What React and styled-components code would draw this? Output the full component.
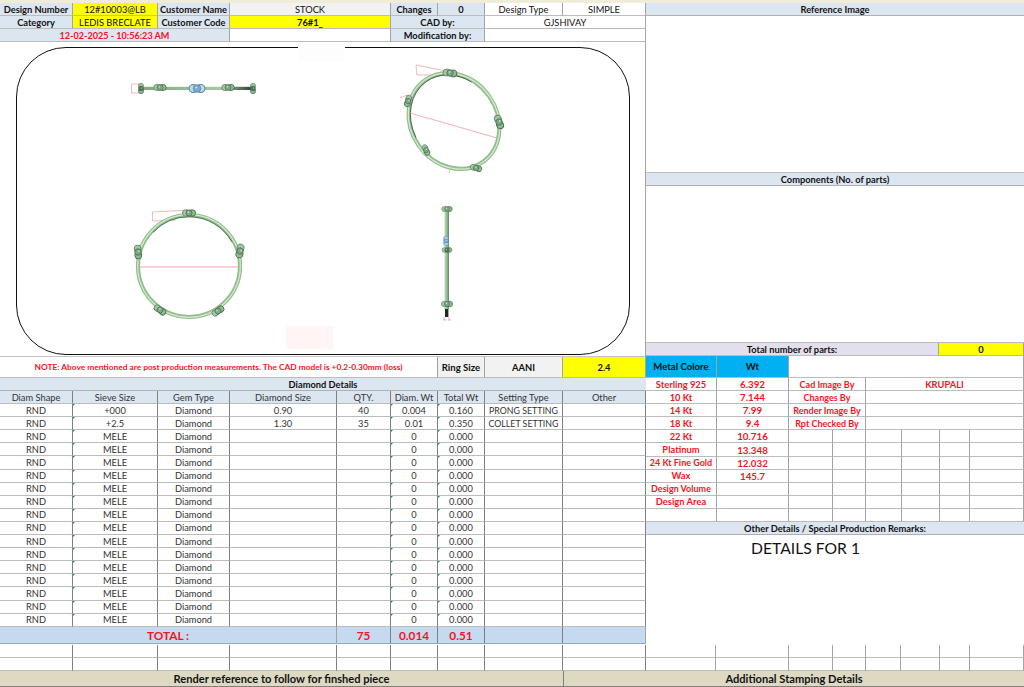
import React from "react";
import styled, { createGlobalStyle } from "styled-components";

const Global = createGlobalStyle`
  html, body { margin: 0; padding: 0; background: #fff; }
  body { font-family: Lato, "Noto Sans", sans-serif; color: #1a1a1a; }
  * { box-sizing: border-box; }
`;

const LINE = "#a3a3a3";
const DARK = "#7f7f7f";

const Page = styled.div`
  width: 1024px;
  height: 687px;
  overflow: hidden;
  display: flex;
  flex-direction: column;
  border-top: 3px solid #efecd9;
`;
const Main = styled.div`
  display: grid;
  grid-template-columns: 646px 378px;
  height: 641.5px;
`;
const Column = styled.div`
  display: flex;
  flex-direction: column;
  min-width: 0;
`;
const Row = styled.div`
  display: grid;
  grid-template-columns: ${(p) => p.$cols};
  height: ${(p) => p.$h || 13.1}px;
  flex: none;
`;
const Cell = styled.div`
  position: relative;
  display: flex;
  align-items: center;
  justify-content: center;
  white-space: nowrap;
  overflow: hidden;
  font-size: ${(p) => p.$size || 9.3}px;
  font-weight: ${(p) => (p.$bold ? 700 : 400)};
  color: ${(p) => (p.$red ? "#f5141e" : p.$soft ? "#333" : "#111")};
  background: ${(p) => p.$bg || "transparent"};
  border-right: 1px solid ${(p) => (p.$strong ? DARK : LINE)};
  border-bottom: 1px solid ${(p) => p.$under || "#bcbcbc"};
  grid-column: ${(p) => (p.$span ? `span ${p.$span}` : "auto")};
  &::before {
    content: "";
    display: ${(p) => (p.$flag ? "block" : "none")};
    position: absolute;
    left: 0;
    top: 0;
    border-top: 2.5px solid #1f8f2f;
    border-right: 2.5px solid transparent;
  }
`;
const Canvas = styled.div`
  height: 315px;
  padding: 5px 15px 1px 16px;
  border-right: 1px solid ${LINE};
  border-bottom: 1px solid #c4c4c4;
  flex: none;
`;
const Frame = styled.div`
  position: relative;
  height: 100%;
  border: 1.5px solid #111;
  border-radius: 50px;
`;
const Drawing = styled.svg`
  position: absolute;
  left: -17.5px;
  top: -6.5px;
  width: 645px;
  height: 314px;
  overflow: visible;
`;
const Panel = styled.div`
  flex: none;
  height: ${(p) => p.$h}px;
  border-bottom: 1px solid #bcbcbc;
`;
const Section = styled.div`
  flex: none;
  height: 13px;
  display: flex;
  align-items: center;
  justify-content: center;
  font-size: 9.3px;
  font-weight: 700;
  color: #111;
  background: ${(p) => p.$bg || "#dce6f1"};
  border-bottom: 1px solid #b0b0b0;
`;
const Remarks = styled.div`
  flex: 1;
  padding: 3px 0 0 105px;
  font-size: 15.7px;
  line-height: 20px;
  color: #111;
`;
const FooterRow = styled.div`
  display: grid;
  grid-template-columns: 563px 461px;
  flex: 1;
  background: #ddd9c3;
  border-bottom: 1px solid ${DARK};
`;
const FooterCell = styled.div`
  display: flex;
  align-items: center;
  justify-content: center;
  font-size: 11.1px;
  font-weight: 700;
  color: #111;
  & + & { border-left: 1px solid ${DARK}; }
`;

const BLUE = "#dce6f1";
const YEL = "#ffff00";
const TOTAL = "#c5d9f1";

const TABLE = "73px 85px 72px 107px 54px 47px 47px 78px 83px";
const NOTE = "438px 47px 78px 83px";
const METAL = "71px 72px 44px 33px 36px 38px 30px 54px";
const FULL = `${TABLE} 70px 73px 44px 33px 35px 39px 30px 54px`;

const ROWS = [
  ["+000", "0.90", "40", "0.004", "0.160", "PRONG SETTING"],
  ["+2.5", "1.30", "35", "0.01", "0.350", "COLLET SETTING"],
  ...Array.from({ length: 15 }, () => ["MELE", "", "", "0", "0.000", ""]),
];

const METALS = [
  ["Sterling 925", "6.392"],
  ["10 Kt", "7.144"],
  ["14 Kt", "7.99"],
  ["18 Kt", "9.4"],
  ["22 Kt", "10.716"],
  ["Platinum", "13.348"],
  ["24 Kt Fine Gold", "12.032"],
  ["Wax", "145.7"],
  ["Design Volume", ""],
  ["Design Area", ""],
  ["", ""],
];
const SIGNERS = [
  ["Cad Image By", "KRUPALI"],
  ["Changes By", ""],
  ["Render Image By", ""],
  ["Rpt Checked By", ""],
];

const Knot = ({ x, y, r = 0, blue, dark, s = 1 }) => (
  <g transform={`translate(${x} ${y}) rotate(${r}) scale(${s * 1.15})`}>
    <ellipse cx="-2.8" cy="0" rx="3.2" ry="3" fill={blue ? "#c3d8e4" : "#a5c8a3"} stroke={blue ? "#4f8ca8" : "#5c8a62"} strokeWidth="0.8" />
    <ellipse cx="2.8" cy="0" rx="3.2" ry="3" fill={blue ? "#c3d8e4" : "#93bb93"} stroke={blue ? "#4f8ca8" : "#3f6b46"} strokeWidth="0.8" />
    <circle cx="0" cy="0" r="2.8" fill={blue ? "#7fa8d0" : dark ? "#4f7455" : "#7fa785"} stroke={blue ? "#4d7fa8" : "#3f6147"} strokeWidth="0.6" />
    <circle cx="-0.6" cy="-0.8" r="0.7" fill="#dcebd8" />
  </g>
);

const Hoop = ({ rx, ry, from, len }) => (
  <g fill="none">
    <ellipse rx={rx} ry={ry} stroke="#93bd8f" strokeWidth="4.2" />
    <ellipse rx={rx + 0.3} ry={ry + 0.3} stroke="#d4ebcf" strokeWidth="1.2" />
    <ellipse rx={rx - 1.8} ry={ry - 1.8} stroke="#3a5a3e" strokeWidth="0.8" pathLength="100" strokeDasharray={`${len} ${100 - len}`} strokeDashoffset={-from} />
  </g>
);

const Rings = () => (
  <Drawing viewBox="0 42 645 314">
    <defs>
      <filter id="soft" x="-10%" y="-10%" width="120%" height="120%">
        <feGaussianBlur stdDeviation="0.4" />
      </filter>
      <linearGradient id="barH" x1="0" x2="1" y1="0" y2="0">
        <stop offset="0" stopColor="#7fa97d" />
        <stop offset="0.7" stopColor="#a6c9a2" />
        <stop offset="1" stopColor="#2e3f30" />
      </linearGradient>
      <linearGradient id="barV" x1="0" x2="1" y1="0" y2="0">
        <stop offset="0" stopColor="#c2dcbd" />
        <stop offset="0.6" stopColor="#8fb68c" />
        <stop offset="1" stopColor="#5d8460" />
      </linearGradient>
    </defs>
    <path d="M286 326 H333 V349 H290 L286 345 Z" fill="#fff5f5" />
    <path d="M298 44 L345 44 L345 62 L298 62 Z" fill="#fdfdfd" />
    <g filter="url(#soft)">
      <g>
        <path d="M140 84 H131.5 V93 H140" fill="none" stroke="#ee9a9a" strokeWidth="0.7" />
        <rect x="140" y="86.8" width="113" height="3.2" fill="url(#barH)" />
        <Knot x={141} y={88.5} r={90} s={0.75} dark />
        <Knot x={160} y={87.5} s={0.9} />
        <Knot x={197} y={88.5} s={1.15} blue />
        <Knot x={228} y={87.5} s={0.9} />
        <Knot x={253} y={88.5} r={90} s={0.75} dark />
      </g>
      <g>
        <path d="M456 73 L416 65 L417 75 L440 75 M400 98 L407 95 L408 100 M451 167 L449 173" fill="none" stroke="#ee9a9a" strokeWidth="0.7" />
        <g transform="translate(454 121) rotate(55)">
          <Hoop rx={50} ry={43} from={28} len={39} />
        </g>
        <path d="M410 113 L497 138" stroke="#ee8f8f" strokeWidth="0.7" />
        <Knot x={450} y={73} r={8} />
        <Knot x={408} y={101} r={105} s={0.85} />
        <Knot x={499} y={122} r={70} />
        <Knot x={426} y={150} r={65} s={0.8} />
        <Knot x={476} y={168} r={15} s={0.85} />
      </g>
      <g>
        <path d="M190 210 L152.5 212 V221 L176 220" fill="none" stroke="#ee9a9a" strokeWidth="0.7" />
        <g transform="translate(189 266)">
          <Hoop rx={51} ry={51} from={62} len={30} />
        </g>
        <path d="M140 267 H239" stroke="#ee8f8f" strokeWidth="0.8" />
        <Knot x={189} y={213} s={0.95} />
        <Knot x={138} y={252} r={85} />
        <Knot x={240} y={251} r={100} />
        <Knot x={160} y={310} r={35} s={0.95} />
        <Knot x={218} y={311} r={-35} s={0.95} />
      </g>
      <g>
        <rect x="444.5" y="208" width="4.5" height="101" fill="url(#barV)" />
        <Knot x={447} y={209} s={0.75} />
        <Knot x={446} y={241} r={90} blue s={0.7} />
        <Knot x={447} y={250} s={0.7} dark />
        <Knot x={447} y={304} s={0.8} />
        <rect x="445" y="309" width="3.4" height="8" fill="#1e2b20" />
        <path d="M444 317 V320 M449 317 V320 M443 320 H446 M448 320 H451" stroke="#ee8f8f" strokeWidth="0.7" fill="none" />
      </g>
    </g>
  </Drawing>
);

export default function App() {
  return (
    <Page>
      <Global />
      <Main>
        <Column>
          <Row $cols={TABLE} $h={13}>
            <Cell $bg={BLUE} $bold>Design Number</Cell>
            <Cell $bg={YEL}>12#10003@LB</Cell>
            <Cell $bg={BLUE} $bold>Customer Name</Cell>
            <Cell $bg="#f2f2f2" $span={2}>STOCK</Cell>
            <Cell $bg={BLUE} $bold>Changes</Cell>
            <Cell $bg={BLUE} $bold>0</Cell>
            <Cell>Design Type</Cell>
            <Cell>SIMPLE</Cell>
          </Row>
          <Row $cols={TABLE} $h={13}>
            <Cell $bg={BLUE} $bold>Category</Cell>
            <Cell $bg={YEL}>LEDIS BRECLATE</Cell>
            <Cell $bg={BLUE} $bold>Customer Code</Cell>
            <Cell $bg={YEL} $bold $span={2}>76#1_</Cell>
            <Cell $bg={BLUE} $bold $span={2}>CAD by:</Cell>
            <Cell $span={2}>GJSHIVAY</Cell>
          </Row>
          <Row $cols={TABLE} $h={13}>
            <Cell $bg={BLUE} $bold $red $span={3} $size={9.1}>12-02-2025 - 10:56:23 AM</Cell>
            <Cell $span={2} />
            <Cell $bg={BLUE} $bold $span={2}>Modification by:</Cell>
            <Cell $span={2} />
          </Row>
          <Canvas>
            <Frame>
              <Rings />
            </Frame>
          </Canvas>
          <Row $cols={NOTE} $h={21}>
            <Cell $bold $red $size={8.37}>NOTE: Above mentioned are post production measurements. The CAD model is +0.2-0.30mm (loss)</Cell>
            <Cell $bg="#f2f2f2" $bold $size={9.6}>Ring Size</Cell>
            <Cell $bg="#f2f2f2" $bold>AANI</Cell>
            <Cell $bg={YEL} $bold>2.4</Cell>
          </Row>
          <Section>Diamond Details</Section>
          <Row $cols={TABLE}>
            {["Diam Shape", "Sieve Size", "Gem Type", "Diamond Size", "QTY.", "Diam. Wt", "Total Wt", "Setting Type", "Other"].map((t) => (
              <Cell key={t} $bg={BLUE} $soft $strong>{t}</Cell>
            ))}
          </Row>
          {ROWS.map((r, i) => (
            <Row key={i} $cols={TABLE}>
              <Cell $strong $soft>RND</Cell>
              <Cell $strong $soft $flag>{r[0]}</Cell>
              <Cell $strong $soft>Diamond</Cell>
              <Cell $strong $soft>{r[1]}</Cell>
              <Cell $strong $soft>{r[2]}</Cell>
              <Cell $strong $soft $flag>{r[3]}</Cell>
              <Cell $strong $soft $flag>{r[4]}</Cell>
              <Cell $strong $soft $size={8.8}>{r[5]}</Cell>
              <Cell $strong $soft />
            </Row>
          ))}
          <Row $cols={TABLE} $h={17.7}>
            <Cell $bg={TOTAL} $bold $red $size={11.8} $span={4} $under="#8ea9c8">TOTAL :</Cell>
            <Cell $bg={TOTAL} $bold $red $size={11.8} $strong $under="#8ea9c8">75</Cell>
            <Cell $bg={TOTAL} $bold $red $size={11.8} $strong $under="#8ea9c8">0.014</Cell>
            <Cell $bg={TOTAL} $bold $red $size={11.8} $strong $under="#8ea9c8">0.51</Cell>
            <Cell $bg={TOTAL} $strong $under="#8ea9c8" />
            <Cell $bg={TOTAL} $under="#8ea9c8" />
          </Row>
        </Column>
        <Column>
          <Section>Reference Image</Section>
          <Panel $h={157} />
          <Section>Components (No. of parts)</Section>
          <Panel $h={157} />
          <Row $cols="293px 85px" $h={13}>
            <Cell $bg="#e4dfec" $bold>Total number of parts:</Cell>
            <Cell $bg={YEL} $bold>0</Cell>
          </Row>
          <Row $cols="71px 72px 235px" $h={22}>
            <Cell $bg="#00b0f0" $bold $size={9.6}>Metal Colore</Cell>
            <Cell $bg="#00b0f0" $bold $size={9.6}>Wt</Cell>
            <Cell />
          </Row>
          {METALS.map((m, i) => (
            <Row key={i} $cols={METAL}>
              <Cell $bold $red $size={m[0].length > 12 ? 9 : 9.4}>{m[0]}</Cell>
              <Cell $bold $red $size={9.8}>{m[1]}</Cell>
              {i < 4 ? (
                <>
                  <Cell $bold $red $span={2} $size={9}>{SIGNERS[i][0]}</Cell>
                  <Cell $bold $red $span={4}>{SIGNERS[i][1]}</Cell>
                </>
              ) : (
                Array.from({ length: 6 }, (_, k) => <Cell key={k} />)
              )}
            </Row>
          ))}
          <Section>Other Details / Special Production Remarks:</Section>
          <Remarks>DETAILS FOR 1</Remarks>
        </Column>
      </Main>
      {[0, 1].map((i) => (
        <Row key={i} $cols={FULL}>
          {Array.from({ length: 17 }, (_, k) => <Cell key={k} $strong={k < 9} />)}
        </Row>
      ))}
      <FooterRow>
        <FooterCell>Render reference to follow for finshed piece</FooterCell>
        <FooterCell>Additional Stamping Details</FooterCell>
      </FooterRow>
    </Page>
  );
}
